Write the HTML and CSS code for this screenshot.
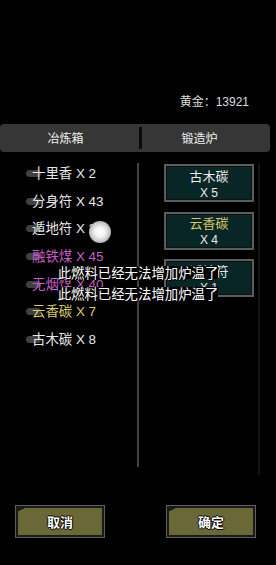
FILE: index.html
```html
<!DOCTYPE html>
<html lang="zh-CN">
<head>
<meta charset="utf-8">
<title>冶炼</title>
<link rel="stylesheet" href="styles.css">
</head>
<body>
<div class="screen">
  <div class="gold">黄金：13921</div>
  <div class="tabs">
    <div class="tab tab-left">冶炼箱</div>
    <div class="tab-divider"></div>
    <div class="tab tab-right">锻造炉</div>
  </div>
  <div class="main">
    <ul class="list">
      <li class="item"><span class="dot"></span>十里香 X 2</li>
      <li class="item"><span class="dot"></span>分身符 X 43</li>
      <li class="item"><span class="dot"></span>遁地符 X 22</li>
      <li class="item purple"><span class="dot"></span>融铁煤 X 45</li>
      <li class="item purple"><span class="dot"></span>无烟煤 X 40</li>
      <li class="item yellow"><span class="dot"></span>云香碳 X 7</li>
      <li class="item"><span class="dot"></span>古木碳 X 8</li>
    </ul>
    <div class="forge">
      <div class="slot"><div class="slot-name">古木碳</div><div class="slot-count">X 5</div></div>
      <div class="slot"><div class="slot-name yellow">云香碳</div><div class="slot-count">X 4</div></div>
      <div class="slot"><div class="slot-name">遁地符</div><div class="slot-count">X 1</div></div>
    </div>
  </div>
  <div class="footer">
    <div class="btn"><span class="btn-text">取消</span></div>
    <div class="btn"><span class="btn-text">确定</span></div>
  </div>
  <div class="touch"></div>
  <div class="toast toast-1"><span>此燃料已经无法增加炉温了</span></div>
  <div class="toast toast-2"><span>此燃料已经无法增加炉温了</span></div>
</div>
</body>
</html>
```
FILE: styles.css
```css
html, body {
  margin: 0;
  padding: 0;
  background: #000;
}
.screen {
  position: relative;
  width: 276px;
  height: 565px;
  overflow: hidden;
  background: #000;
  font-family: "Liberation Sans", "Noto Sans CJK SC", sans-serif;
  color: #e6e6e6;
}
.gold {
  margin-top: 95px;
  height: 14px;
  line-height: 14px;
  font-size: 12px;
  text-align: right;
  padding-right: 27px;
  color: #dcdcdc;
}
.tabs {
  margin-top: 15px;
  width: 270px;
  height: 28px;
  background: #363636;
  border-radius: 4px;
  display: flex;
  align-items: center;
}
.tab {
  font-size: 12px;
  line-height: 28px;
  padding-top: 2px;
  text-align: center;
  color: #f0f0f0;
}
.tab-left {
  width: 131px;
  margin-right: 8px;
}
.tab-divider {
  width: 3px;
  height: 22px;
  background: #0a0a0a;
}
.tab-right {
  width: 115px;
}
.main {
  margin-top: 11px;
  display: flex;
  align-items: flex-start;
}
.list {
  list-style: none;
  margin: 0;
  padding: 0;
  width: 137px;
  height: 304px;
  border-right: 2px solid #444;
  display: flex;
  flex-direction: column;
  gap: 5.67px;
}
.item {
  height: 22px;
  line-height: 22px;
  font-size: 13.4px;
  padding-left: 26px;
  color: #e8e8e8;
  white-space: nowrap;
}
.dot {
  display: inline-block;
  width: 15px;
  height: 7px;
  border-radius: 4px;
  background: #414141;
  margin-right: -9px;
  vertical-align: 1px;
}
.purple { color: #c55fc5; }
.yellow { color: #dac96a; }
.forge {
  width: 94px;
  height: 311px;
  padding: 1px 0 0 25px;
  border-right: 2px solid #151515;
  display: flex;
  flex-direction: column;
  gap: 9.5px;
}
.slot {
  box-sizing: border-box;
  width: 90px;
  height: 38px;
  border: 2px solid #5c5c5c;
  box-shadow: inset 0 0 0 1px #111;
  background: #082626;
  text-align: center;
  padding-top: 2.5px;
}
.slot-name {
  font-size: 13px;
  line-height: 15px;
  color: #ececec;
}
.slot-name.yellow { color: #dac96a; }
.slot-count {
  margin-top: 2px;
  font-size: 12px;
  line-height: 15px;
  color: #ececec;
}
.footer {
  margin-top: 30px;
  display: flex;
  padding-left: 15px;
  gap: 61px;
}
.btn {
  position: relative;
  box-sizing: border-box;
  width: 90px;
  height: 33px;
  border: 1px solid #5e5e5e;
  box-shadow: inset 0 0 0 2px #1a1a1a;
  background:
    linear-gradient(150deg, #1a1a1a 0, #1a1a1a 6px, transparent 6px),
    #6b6838;
  display: flex;
  align-items: center;
  justify-content: center;
}
.btn-text {
  font-size: 13px;
  font-weight: bold;
  color: #fff;
  text-shadow: 1px 0 0 #000, -1px 0 0 #000, 0 1px 0 #000, 0 -1px 0 #000;
}
.touch {
  position: absolute;
  left: 89px;
  top: 221px;
  width: 22px;
  height: 22px;
  border-radius: 50%;
  background: radial-gradient(circle, #ffffff 0%, #f4f4f4 30%, #c8c8c8 60%, #8a8a8a 85%, rgba(110,110,110,0.4) 100%);
}
.toast {
  position: absolute;
  left: 0;
  right: 0;
  text-align: center;
  font-size: 13.4px;
  line-height: 13px;
  font-family: "Noto Sans CJK SC", sans-serif;
}
.toast span {
  display: inline-block;
  background: #000;
  color: #fff;
  text-shadow: 1px 1px 0 #000, -1px -1px 0 #000;
}
.toast-1 { top: 266px; }
.toast-2 { top: 287px; }
```
